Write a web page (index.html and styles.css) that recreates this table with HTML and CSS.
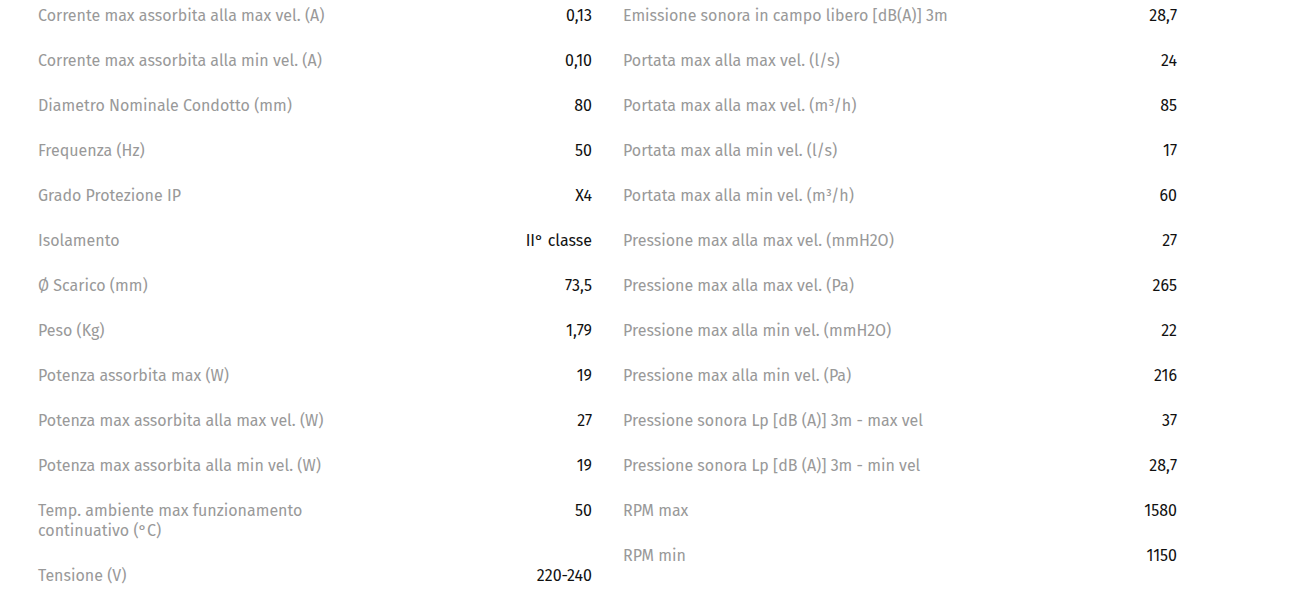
FILE: index.html
```html
<!DOCTYPE html>
<html lang="it">
<head>
<meta charset="utf-8">
<link rel="stylesheet" href="styles.css">
</head>
<body>
<div class="specs">
  <div class="col">
    <div class="row"><span class="label">Corrente max assorbita alla max vel. (A)</span><span class="value">0,13</span></div>
    <div class="row"><span class="label">Corrente max assorbita alla min vel. (A)</span><span class="value">0,10</span></div>
    <div class="row"><span class="label">Diametro Nominale Condotto (mm)</span><span class="value">80</span></div>
    <div class="row"><span class="label">Frequenza (Hz)</span><span class="value">50</span></div>
    <div class="row"><span class="label">Grado Protezione IP</span><span class="value">X4</span></div>
    <div class="row"><span class="label">Isolamento</span><span class="value">II° classe</span></div>
    <div class="row"><span class="label">Ø Scarico (mm)</span><span class="value">73,5</span></div>
    <div class="row"><span class="label">Peso (Kg)</span><span class="value">1,79</span></div>
    <div class="row"><span class="label">Potenza assorbita max (W)</span><span class="value">19</span></div>
    <div class="row"><span class="label">Potenza max assorbita alla max vel. (W)</span><span class="value">27</span></div>
    <div class="row"><span class="label">Potenza max assorbita alla min vel. (W)</span><span class="value">19</span></div>
    <div class="row"><span class="label">Temp. ambiente max funzionamento continuativo (°C)</span><span class="value">50</span></div>
    <div class="row"><span class="label">Tensione (V)</span><span class="value">220-240</span></div>
  </div>
  <div class="col">
    <div class="row"><span class="label">Emissione sonora in campo libero [dB(A)] 3m</span><span class="value">28,7</span></div>
    <div class="row"><span class="label">Portata max alla max vel. (l/s)</span><span class="value">24</span></div>
    <div class="row"><span class="label">Portata max alla max vel. (m³/h)</span><span class="value">85</span></div>
    <div class="row"><span class="label">Portata max alla min vel. (l/s)</span><span class="value">17</span></div>
    <div class="row"><span class="label">Portata max alla min vel. (m³/h)</span><span class="value">60</span></div>
    <div class="row"><span class="label">Pressione max alla max vel. (mmH2O)</span><span class="value">27</span></div>
    <div class="row"><span class="label">Pressione max alla max vel. (Pa)</span><span class="value">265</span></div>
    <div class="row"><span class="label">Pressione max alla min vel. (mmH2O)</span><span class="value">22</span></div>
    <div class="row"><span class="label">Pressione max alla min vel. (Pa)</span><span class="value">216</span></div>
    <div class="row"><span class="label">Pressione sonora Lp [dB (A)] 3m - max vel</span><span class="value">37</span></div>
    <div class="row"><span class="label">Pressione sonora Lp [dB (A)] 3m - min vel</span><span class="value">28,7</span></div>
    <div class="row"><span class="label">RPM max</span><span class="value">1580</span></div>
    <div class="row"><span class="label">RPM min</span><span class="value">1150</span></div>
  </div>
</div>
</body>
</html>
```
FILE: styles.css
```css
html, body {
  margin: 0;
  padding: 0;
  background: #fff;
}
body {
  font-family: "Fira Sans", Lato, "Open Sans", sans-serif;
  font-size: 16px;
  line-height: 20px;
}
.specs {
  display: flex;
  gap: 31px;
  padding: 6px 0 0 38px;
}
.col {
  width: 554px;
  display: flex;
  flex-direction: column;
}
.row {
  display: flex;
  justify-content: space-between;
  align-items: flex-start;
  padding-bottom: 25px;
}
.label {
  color: #999;
  width: 330px;
}
.value {
  color: #111;
  text-align: right;
}
```
